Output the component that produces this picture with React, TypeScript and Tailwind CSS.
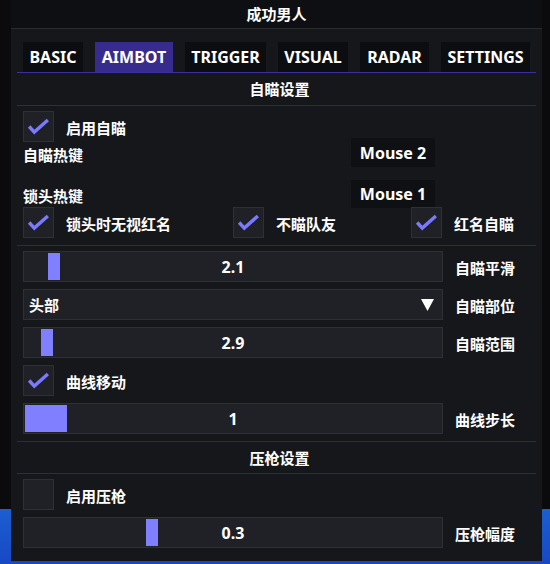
import React from 'react'

const TABS = [
  { name: 'BASIC', w: 'w-[60px]' },
  { name: 'AIMBOT', w: 'w-[78px]', active: true },
  { name: 'TRIGGER', w: 'w-[81px]' },
  { name: 'VISUAL', w: 'w-[70px]' },
  { name: 'RADAR', w: 'w-[69px]' },
  { name: 'SETTINGS', w: 'w-[89px]' },
]

const Check = ({ checked }: { checked: boolean }) => (
  <div className="w-[31px] h-[31px] shrink-0 bg-[#1f2126] border border-[#2e3035] flex items-center justify-center">
    {checked && (
      <svg width="31" height="31" viewBox="0 0 31 31">
        <polyline points="5.5,15.5 11,21.5 25.5,8.5" fill="none" stroke="#7a7aff" strokeWidth="3.6" />
      </svg>
    )}
  </div>
)

const CheckRow = ({ label, checked, className = '' }: { label: string; checked: boolean; className?: string }) => (
  <div className={`flex items-center gap-[12px] h-[31px] ${className}`}>
    <Check checked={checked} />
    <span className="pt-[3px] text-[15px] font-bold">{label}</span>
  </div>
)

const Slider = ({ value, grab, grabW = 12, label }: { value: string; grab: number; grabW?: number; label: string }) => (
  <div className="flex items-center mt-[7px]">
    <div className="relative w-[420px] h-[31px] bg-[#1f2126] border border-[#2e3035] flex items-center justify-center">
      <div className="absolute top-[1px] bottom-[1px] bg-[#7f7fff]" style={{ left: grab, width: grabW }} />
      <span className="relative pt-[1px] text-[16px] font-bold">{value}</span>
    </div>
    <span className="ml-[12px] pt-[3px] text-[15px] font-bold">{label}</span>
  </div>
)

const Section = ({ title, className = '' }: { title: string; className?: string }) => (
  <div className={`border-b border-[#2a2f3d] flex items-center justify-center pl-[6px] ${className}`}>
    <span className="text-[15px] font-bold">{title}</span>
  </div>
)

export default function App() {
  return (
    <div className="w-[550px] h-[564px] overflow-hidden bg-[linear-gradient(to_bottom,#0b0b0d_0px,#0b0b0d_509px,#1b5fd0_509px,#1848c4_564px)] font-['Noto_Sans','Noto_Sans_CJK_SC',sans-serif] text-white">
      <div className="ml-[11px] w-[531px] h-[561px] bg-[#16171b] flex flex-col">
        <div className="h-[29px] shrink-0 bg-[#0e0f12] border-b border-[#2a2b2f] flex items-center justify-center">
          <span className="text-[15px] font-bold">成功男人</span>
        </div>

        <div className="px-[6px] flex flex-col">
          <div className="mt-[13px] h-[31px] pl-[6px] border-b border-[#3a2f9e] flex gap-[12px]">
            {TABS.map((t) => (
              <div
                key={t.name}
                className={`${t.w} h-[30px] flex items-center justify-center text-[16px] font-bold ${
                  t.active ? 'bg-[#372b8e]' : 'bg-[#0c0d10]'
                }`}
              >
                {t.name}
              </div>
            ))}
          </div>

          <Section title="自瞄设置" className="h-[33px]" />

          <div className="px-[6px] flex flex-col">
            <CheckRow label="启用自瞄" checked className="mt-[5px]" />

            <div className="mt-[-4px] h-[29px] flex items-center justify-between pr-[95px]">
              <span className="pt-[5px] text-[15px] font-bold">自瞄热键</span>
              <div className="w-[84px] h-[29px] bg-[#0f1013] flex items-center justify-center text-[16px] font-bold">
                Mouse 2
              </div>
            </div>
            <div className="mt-[13px] h-[28px] flex items-center justify-between pr-[95px]">
              <span className="pt-[5px] text-[15px] font-bold">锁头热键</span>
              <div className="w-[84px] h-[28px] bg-[#0f1013] flex items-center justify-center text-[16px] font-bold">
                Mouse 1
              </div>
            </div>

            <div className="mt-[-1px] flex">
              <CheckRow label="锁头时无视红名" checked className="w-[210px]" />
              <CheckRow label="不瞄队友" checked className="w-[178px]" />
              <CheckRow label="红名自瞄" checked />
            </div>
          </div>

          <div className="mt-[7px] h-px bg-[#2a2f3d]" />

          <div className="px-[6px] flex flex-col">
            <div className="mt-[-2px]" />
            <Slider value="2.1" grab={24} label="自瞄平滑" />

            <div className="flex items-center mt-[7px]">
              <div className="w-[420px] h-[31px] bg-[#1f2126] border border-[#2e3035] flex items-center justify-between pl-[5px] pr-[8px]">
                <span className="pt-[2px] text-[15px] font-bold">头部</span>
                <svg width="13" height="12" viewBox="0 0 13 12">
                  <polygon points="0,0 13,0 6.5,12" fill="#ffffff" />
                </svg>
              </div>
              <span className="ml-[12px] pt-[3px] text-[15px] font-bold">自瞄部位</span>
            </div>

            <Slider value="2.9" grab={17} label="自瞄范围" />
            <CheckRow label="曲线移动" checked className="mt-[7px]" />
            <Slider value="1" grab={1} grabW={42} label="曲线步长" />
          </div>

          <div className="mt-[7px] h-px bg-[#2a2f3d]" />
          <Section title="压枪设置" className="h-[32px] pt-[1px]" />

          <div className="px-[6px] flex flex-col">
            <CheckRow label="启用压枪" checked={false} className="mt-[5px]" />
            <Slider value="0.3" grab={122} label="压枪幅度" />
          </div>
        </div>
      </div>
    </div>
  )
}
